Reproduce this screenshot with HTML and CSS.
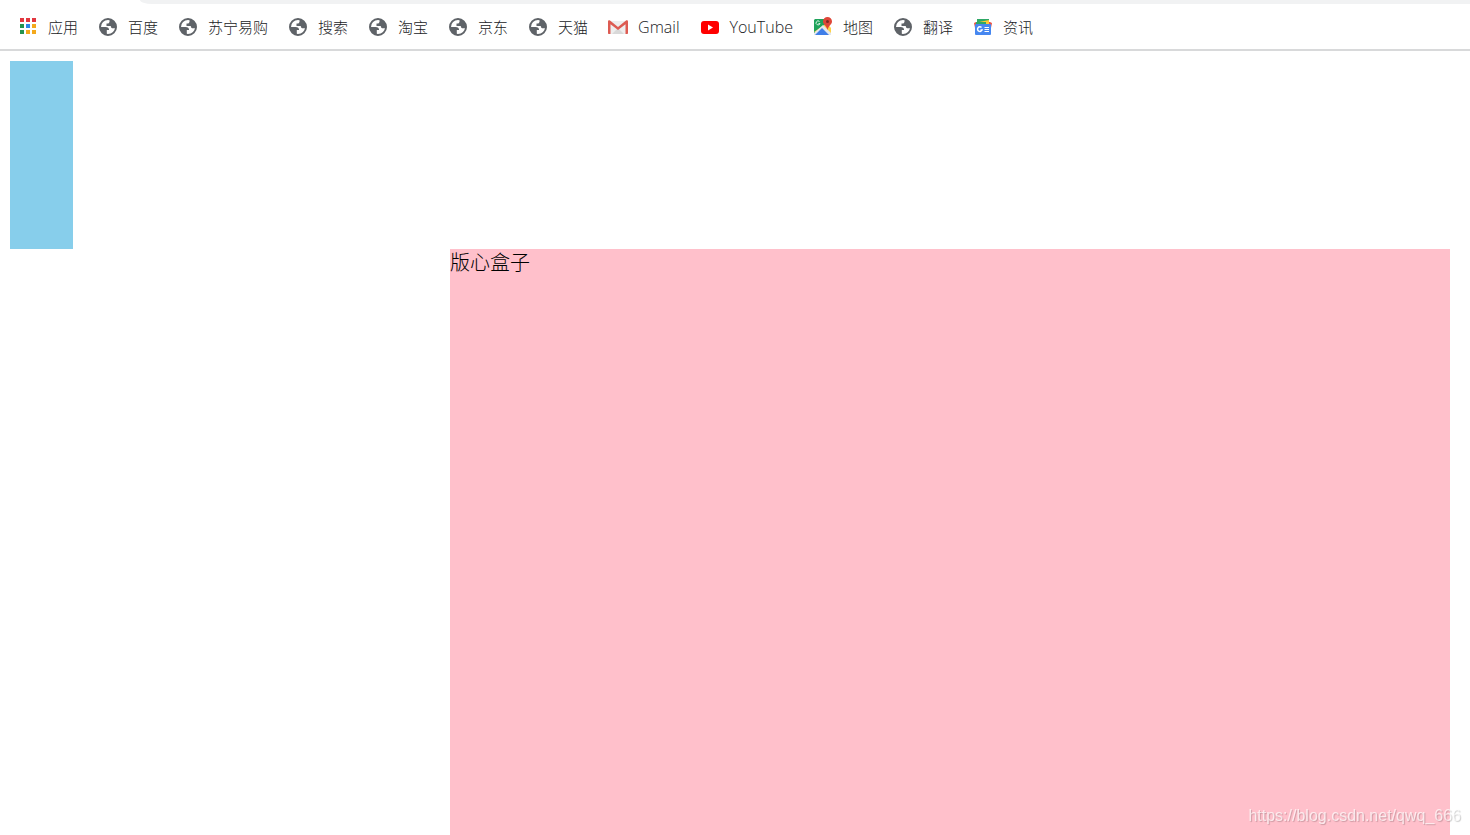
FILE: index.html
```
<!DOCTYPE html>
<html lang="zh-CN">
<head>
    <meta charset="UTF-8">
    <meta name="viewport" content="width=device-width, initial-scale=1">
    <title>版心盒子</title>
    <link rel="stylesheet" href="styles.css">
</head>
<body>
    <!-- Shared icon -->
    <svg class="sprite" aria-hidden="true">
        <symbol id="globe" viewBox="0 0 20 20">
            <circle cx="10" cy="10" r="8" fill="#fff" stroke="#5f6368" stroke-width="2"/>
            <path fill="#5f6368" d="M2 10h5.500c2.400 0 3.600 1 3.600 3H8.800v4.800A8 8 0 0 1 2 10z"/>
            <path fill="#5f6368" d="M11.500 2A8 8 0 0 1 18 10c-.8 1-1.700 1.200-2.700 1.200-1.800 0-2.500-.9-2.500-2.300H8.500V6.500h1.700c1.300 0 1.600-2.300 1.300-4.500z"/>
        </symbol>
    </svg>

    <div class="toolbar"></div>
    <nav class="bookmarks">
        <a href="#">
            <svg class="icon" viewBox="0 0 20 20">
                <path fill="#e2373f" d="M2 1h4v4H2zM8 1h4v4H8zM14 1h4v4h-4z"/>
                <path fill="#24934f" d="M2 7h4v4H2zM2 13h4v4H2z"/>
                <path fill="#2f86e8" d="M8 7h4v4H8z"/>
                <path fill="#f4a91c" d="M14 7h4v4h-4zM8 13h4v4H8zM14 13h4v4h-4z"/>
            </svg>
            应用
        </a>
        <a href="#"><svg class="icon"><use href="#globe"/></svg>百度</a>
        <a href="#"><svg class="icon"><use href="#globe"/></svg>苏宁易购</a>
        <a href="#"><svg class="icon"><use href="#globe"/></svg>搜索</a>
        <a href="#"><svg class="icon"><use href="#globe"/></svg>淘宝</a>
        <a href="#"><svg class="icon"><use href="#globe"/></svg>京东</a>
        <a href="#"><svg class="icon"><use href="#globe"/></svg>天猫</a>
        <a href="#" class="latin">
            <svg class="icon" viewBox="0 0 20 20">
                <path fill="#eeeeee" d="M2 4h16v13H2z"/>
                <path fill="#d9d9d9" d="M4 17l6-6 6 6z"/>
                <path fill="#dd5b52" d="M0 4.500C0 3.500 1 3 2 3.500l8 6.500 8-6.500c1-.5 2 0 2 1V16c0 .6-.4 1-1 1h-1.500V7.200L10 13 2.500 7.200V17H1c-.6 0-1-.4-1-1z"/>
            </svg>
            Gmail
        </a>
        <a href="#" class="latin">
            <svg class="icon" viewBox="0 0 20 20">
                <rect x="1" y="4" width="18" height="13" rx="3" fill="#f00"/>
                <path fill="#fff" d="M8 7.500v6l5-3z"/>
            </svg>
            YouTube
        </a>
        <a href="#">
            <svg class="icon" viewBox="0 0 20 20">
                <path fill="#1fa35b" d="M2 2h12v8L3 18H1V3z"/>
                <path fill="#ffd24a" d="M1 15L14 6l4 5v6H14z"/>
                <path fill="#e4e8ec" d="M1 16L10 8l8 8v2H1z"/>
                <path fill="#3f7ee8" d="M2 18l7-7 7 7z"/>
                <path fill="none" stroke="#d8f3e3" stroke-width="1" d="M6.500 4.500a2 2 0 1 0 .5 2H5.500"/>
                <path fill="#de4638" d="M14.500 0a4.500 4.500 0 0 1 4.500 4.500c0 3-3.500 4-4.500 8.500C13.500 8.500 10 7.500 10 4.500A4.500 4.500 0 0 1 14.500 0z"/>
                <circle cx="14.500" cy="4.500" r="1.500" fill="#7d2a22"/>
            </svg>
            地图
        </a>
        <a href="#"><svg class="icon"><use href="#globe"/></svg>翻译</a>
        <a href="#">
            <svg class="icon" viewBox="0 0 20 20">
                <path fill="#2fa866" d="M4 2h12v6H4z"/>
                <path fill="#e95448" d="M1 6l2-1h14l2 1-1 5H2z"/>
                <path fill="#ffcb32" d="M6 5l10-2v5H6z"/>
                <path fill="#2fa866" d="M3 5h10v3H3z"/>
                <rect x="2" y="7" width="16" height="11" rx="1" fill="#4687f0"/>
                <path fill="none" stroke="#fff" stroke-width="1.500" d="M8.500 10.500a2.300 2.300 0 1 0 .5 2.500H7.500"/>
                <path fill="none" stroke="#fff" stroke-width="1" d="M11.500 10.500H16M11.500 12.500H16M11.500 14.500H16"/>
            </svg>
            资讯
        </a>
    </nav>

    <main class="page">
        <div class="side"></div>
        <div class="center">版心盒子</div>
    </main>
    <div class="watermark">https://blog.csdn.net/qwq_666</div>
</body>
</html>
```
FILE: styles.css
```
* {
    box-sizing: border-box;
}

body {
    margin: 0;
    height: 100vh;
    display: flex;
    flex-direction: column;
    background-color: #fff;
    font-family: "Open Sans", "Noto Sans CJK SC", sans-serif;
    overflow: hidden;
}

.sprite {
    display: none;
}

/* Lower edge of the address bar */
.toolbar {
    height: 4px;
    margin-left: 140px;
    background-color: #f1f2f3;
    border-bottom-left-radius: 12px 4px;
}

.bookmarks {
    display: flex;
    align-items: center;
    gap: 20px;
    height: 47px;
    padding: 0 18px;
    border-bottom: 2px solid #d8d9da;
}

.bookmarks a {
    display: flex;
    align-items: center;
    gap: 10px;
    color: #202124;
    font-size: 15px;
    font-weight: 300;
    line-height: 20px;
    text-decoration: none;
    white-space: nowrap;
}

.bookmarks .latin {
    font-size: 16px;
}

.icon {
    width: 20px;
    height: 20px;
}

.page {
    flex: 1;
    display: flex;
    flex-direction: column;
    padding: 10px 20px 0 10px;
}

.side {
    width: 63px;
    height: 188px;
    flex-shrink: 0;
    background-color: skyblue;
}

.center {
    flex: 1;
    width: 1000px;
    margin-left: auto;
    background-color: pink;
    color: #000;
    font-size: 20px;
    font-weight: 300;
    line-height: 28px;
}

.watermark {
    position: fixed;
    right: 9px;
    bottom: 9px;
    color: rgba(255, 255, 255, 0.7);
    font-family: "Liberation Sans", Arial, sans-serif;
    font-size: 16px;
    line-height: 20px;
    text-shadow: 1px 1px 1px rgba(0, 0, 0, 0.2);
}
```
